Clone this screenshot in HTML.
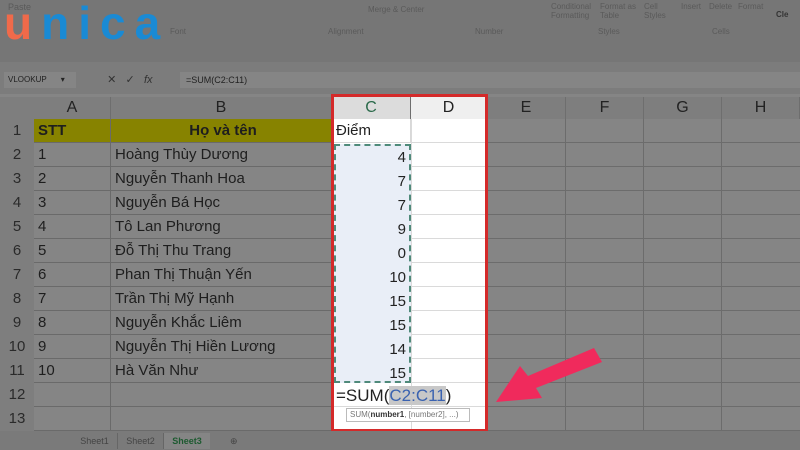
<!DOCTYPE html><html><head><meta charset="utf-8"><style>
*{margin:0;padding:0;box-sizing:border-box}
body{width:800px;height:450px;overflow:hidden;background:#858585;font-family:"Liberation Sans",sans-serif;position:relative}
.a{position:absolute}
.rib{left:0;top:0;width:800px;height:62px;background:#767676}
.rt{color:#5a5a5a;font-size:8px;position:absolute}
.c{position:absolute;border-right:1px solid #6a6a6a;border-bottom:1px solid #6a6a6a;font-size:15px;color:#1e1e1e;line-height:23px;padding-left:4px;white-space:nowrap;overflow:hidden}
.rh{position:absolute;left:0;width:34px;text-align:center;font-size:15px;color:#2a2a2a;line-height:24px;background:#7e7e7e;border-bottom:1px solid #6e6e6e}
.ch{position:absolute;top:97px;height:22px;text-align:center;font-size:16px;color:#222;line-height:22px;background:#7e7e7e;border-right:1px solid #6e6e6e}
.w{background:#fff;color:#222}
</style></head><body>
<div class="a rib"></div>
<div class="rt" style="left:8px;top:2px;font-size:9px">Paste</div>
<div class="rt" style="left:170px;top:27px">Font</div>
<div class="rt" style="left:328px;top:27px">Alignment</div>
<div class="rt" style="left:475px;top:27px">Number</div>
<div class="rt" style="left:598px;top:27px">Styles</div>
<div class="rt" style="left:712px;top:27px">Cells</div>
<div class="rt" style="left:368px;top:5px">Merge &amp; Center</div>
<div class="rt" style="left:551px;top:2px">Conditional<br>Formatting</div>
<div class="rt" style="left:600px;top:2px">Format as<br>Table</div>
<div class="rt" style="left:644px;top:2px">Cell<br>Styles</div>
<div class="rt" style="left:681px;top:2px">Insert</div>
<div class="rt" style="left:709px;top:2px">Delete</div>
<div class="rt" style="left:738px;top:2px">Format</div>
<div class="rt" style="left:776px;top:10px;color:#333;font-weight:bold">Cle</div>
<div class="a" style="left:4px;top:0px;font-size:46px;font-weight:bold;letter-spacing:9px;line-height:46px"><span style="color:#f06a4a">u</span><span style="color:#1a8ad4">nica</span></div>
<div class="a" style="left:0;top:62px;width:800px;height:32px;background:#7c7c7c"></div>
<div class="a" style="left:4px;top:72px;width:72px;height:16px;background:#858585;font-size:8px;color:#222;line-height:16px;padding-left:4px">VLOOKUP <span style="margin-left:12px">▾</span></div>
<div class="a" style="left:98px;top:72px;width:80px;height:16px;font-size:11px;color:#333;line-height:16px">&nbsp;&nbsp;&nbsp;✕&nbsp;&nbsp;&nbsp;✓&nbsp;&nbsp;&nbsp;<i>fx</i></div>
<div class="a" style="left:180px;top:72px;width:620px;height:16px;background:#858585;font-size:9px;color:#222;line-height:16px;padding-left:6px">=SUM(C2:C11)</div>
<div class="a" style="left:0;top:97px;width:800px;height:22px;background:#7e7e7e"></div>
<div class="ch" style="left:34px;width:77px">A</div>
<div class="ch" style="left:111px;width:221px">B</div>
<div class="ch" style="left:332px;width:79px;background:#dcdcdc;color:#2a6a4a">C</div>
<div class="ch" style="left:411px;width:76px;background:#efefef">D</div>
<div class="ch" style="left:487px;width:79px">E</div>
<div class="ch" style="left:566px;width:78px">F</div>
<div class="ch" style="left:644px;width:78px">G</div>
<div class="ch" style="left:722px;width:78px">H</div>
<div class="rh" style="top:119px">1</div><div class="rh" style="top:143px">2</div><div class="rh" style="top:167px">3</div><div class="rh" style="top:191px">4</div><div class="rh" style="top:215px">5</div><div class="rh" style="top:239px">6</div><div class="rh" style="top:263px">7</div><div class="rh" style="top:287px">8</div><div class="rh" style="top:311px">9</div><div class="rh" style="top:335px">10</div><div class="rh" style="top:359px">11</div><div class="rh" style="top:383px">12</div><div class="rh" style="top:407px">13</div>
<div class="c" style="left:34px;top:119px;width:77px;height:24px;background:#878300;font-weight:bold">STT</div>
<div class="c" style="left:111px;top:119px;width:221px;height:24px;background:#878300;font-weight:bold;text-align:center">Họ và tên</div>
<div class="c" style="left:34px;top:143px;width:77px;height:24px">1</div><div class="c" style="left:111px;top:143px;width:221px;height:24px">Hoàng Thùy Dương</div>
<div class="c" style="left:34px;top:167px;width:77px;height:24px">2</div><div class="c" style="left:111px;top:167px;width:221px;height:24px">Nguyễn Thanh Hoa</div>
<div class="c" style="left:34px;top:191px;width:77px;height:24px">3</div><div class="c" style="left:111px;top:191px;width:221px;height:24px">Nguyễn Bá Học</div>
<div class="c" style="left:34px;top:215px;width:77px;height:24px">4</div><div class="c" style="left:111px;top:215px;width:221px;height:24px">Tô Lan Phương</div>
<div class="c" style="left:34px;top:239px;width:77px;height:24px">5</div><div class="c" style="left:111px;top:239px;width:221px;height:24px">Đỗ Thị Thu Trang</div>
<div class="c" style="left:34px;top:263px;width:77px;height:24px">6</div><div class="c" style="left:111px;top:263px;width:221px;height:24px">Phan Thị Thuận Yến</div>
<div class="c" style="left:34px;top:287px;width:77px;height:24px">7</div><div class="c" style="left:111px;top:287px;width:221px;height:24px">Trần Thị Mỹ Hạnh</div>
<div class="c" style="left:34px;top:311px;width:77px;height:24px">8</div><div class="c" style="left:111px;top:311px;width:221px;height:24px">Nguyễn Khắc Liêm</div>
<div class="c" style="left:34px;top:335px;width:77px;height:24px">9</div><div class="c" style="left:111px;top:335px;width:221px;height:24px">Nguyễn Thị Hiền Lương</div>
<div class="c" style="left:34px;top:359px;width:77px;height:24px">10</div><div class="c" style="left:111px;top:359px;width:221px;height:24px">Hà Văn Như</div>
<div class="c" style="left:34px;top:383px;width:77px;height:24px"></div><div class="c" style="left:111px;top:383px;width:221px;height:24px"></div>
<div class="c" style="left:34px;top:407px;width:77px;height:24px"></div><div class="c" style="left:111px;top:407px;width:221px;height:24px"></div>
<div class="a" style="left:487px;top:119px;width:313px;height:312px;background:repeating-linear-gradient(to bottom,transparent 0 23px,#6c6c6c 23px 24px)"></div>
<div class="a" style="left:565px;top:119px;width:1px;height:312px;background:#6c6c6c"></div>
<div class="a" style="left:643px;top:119px;width:1px;height:312px;background:#6c6c6c"></div>
<div class="a" style="left:721px;top:119px;width:1px;height:312px;background:#6c6c6c"></div>
<div class="a" style="left:332px;top:119px;width:155px;height:312px;background:#fff"></div>
<div class="a" style="left:332px;top:119px;width:155px;height:312px;background:repeating-linear-gradient(to bottom,transparent 0 23px,#dadada 23px 24px)"></div>
<div class="a" style="left:411px;top:119px;width:1px;height:312px;background:#dadada"></div>
<div class="c w" style="left:332px;top:119px;width:79px;height:24px;border-color:#d8d8d8">Điểm</div>
<div class="a" style="left:334px;top:144px;width:77px;height:239px;background:#e9eef7;border:2px dashed #4f8a7a"></div>
<div class="a" style="left:336px;top:146px;width:70px;font-size:15px;color:#222;text-align:right;line-height:24px">4<br>7<br>7<br>9<br>0<br>10<br>15<br>15<br>14<br>15<br>15</div>
<div class="a" style="left:336px;top:384px;font-size:17px;color:#222;line-height:24px">=SUM(<span style="background:#c8c8c8;color:#3a62b0">C2:C11</span>)</div>
<div class="a" style="left:346px;top:408px;width:124px;height:14px;border:1px solid #bbb;background:#fff;font-size:8px;color:#777;line-height:12px;padding-left:3px">SUM(<b style="color:#333">number1</b>, [number2], ...)</div>
<div class="a" style="left:331px;top:94px;width:157px;height:338px;border:3px solid #d42a2a"></div>
<div class="a" style="left:0;top:431px;width:800px;height:19px;background:#7a7a7a"></div>
<div class="a" style="left:72px;top:433px;font-size:9px;color:#444;line-height:16px">
<span style="display:inline-block;width:46px;text-align:center;border-right:1px solid #666">Sheet1</span><span style="display:inline-block;width:46px;text-align:center;border-right:1px solid #666">Sheet2</span><span style="display:inline-block;width:46px;text-align:center;background:#858585;color:#1d5a30;font-weight:bold">Sheet3</span><span style="margin-left:20px">⊕</span></div>
<svg class="a" style="left:490px;top:340px" width="120" height="70"><polygon points="104,8 112,22 46,48 52,58 6,62 30,26 38,36" fill="#f02a5c"/></svg>
</body></html>
